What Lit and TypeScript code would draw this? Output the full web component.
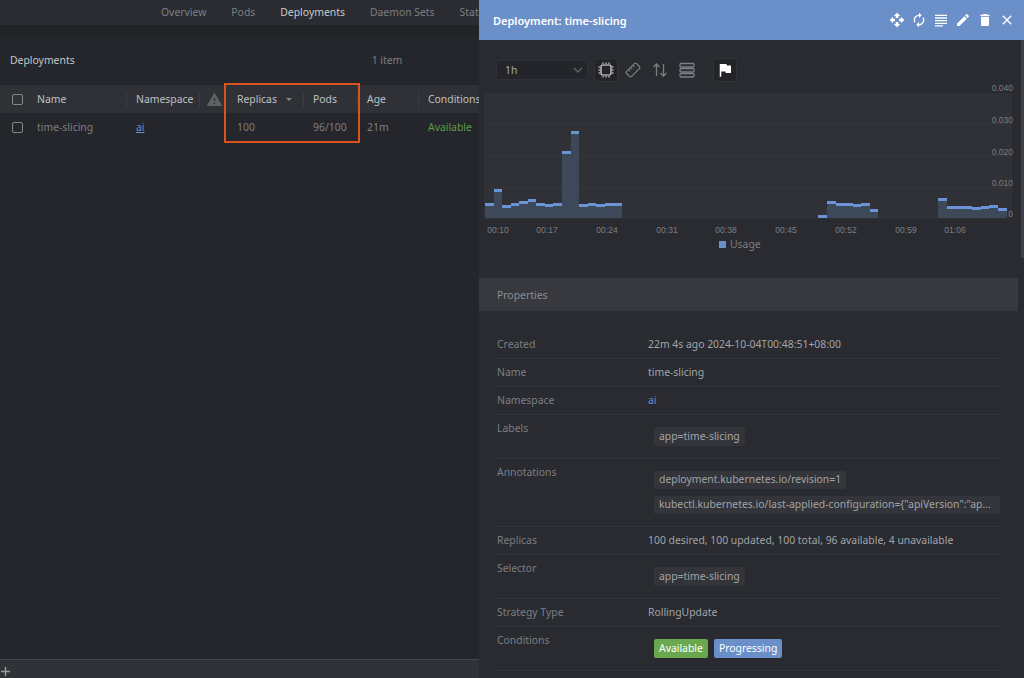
import { LitElement, html, css, svg } from 'lit';
import { customElement } from 'lit/decorators.js';

const headerIcons = [
  'M10 9h4V6h3l-5-5-5 5h3v3zm-1 1H6V7l-5 5 5 5v-3h3v-4zm14 2l-5-5v3h-3v4h3v3l5-5zm-9 3h-4v3H7l5 5 5-5h-3v-3z',
  'M12 6v3l4-4-4-4v3c-4.42 0-8 3.58-8 8 0 1.57.46 3.03 1.24 4.26L6.7 14.8c-.45-.83-.7-1.79-.7-2.8 0-3.31 2.69-6 6-6zm6.76 1.74L17.3 9.2c.44.84.7 1.79.7 2.8 0 3.31-2.69 6-6 6v-3l-4 4 4 4v-3c4.42 0 8-3.58 8-8 0-1.57-.46-3.03-1.24-4.26z',
  'M3 4h18v2H3zM3 8h18v2H3zM3 12h18v2H3zM3 16h18v2H3zM3 20h12v1.6H3z',
  'M3 17.25V21h3.75L17.81 9.94l-3.75-3.75L3 17.25zM20.71 7.04c.39-.39.39-1.02 0-1.41l-2.34-2.34c-.39-.39-1.02-.39-1.41 0l-1.83 1.83 3.75 3.75 1.83-1.83z',
  'M6 19c0 1.1.9 2 2 2h8c1.1 0 2-.9 2-2V7H6v12zM19 4h-3.5l-1-1h-5l-1 1H5v2h14V4z',
  'M19 6.41L17.59 5 12 10.59 6.41 5 5 6.41 10.59 12 5 17.59 6.41 19 12 13.41 17.59 19 19 17.59 13.41 12z',
];

// top y of each bar, by bucket index (61 buckets of 8.55px)
const BAR_W = 8.55;
const BAR_X = 485;
const BAR_BOTTOM = 218;
const bars: [number, number][] = [
  [0, 203], [1, 188.7], [2, 205], [3, 203], [4, 200.7], [5, 199], [6, 202.7], [7, 204.3],
  [8, 202.7], [9, 151.3], [10, 131], [11, 204], [12, 202.7], [13, 204], [14, 203], [15, 203],
  [39, 214.7], [40, 201], [41, 203.3], [42, 203.3], [43, 204.3], [44, 202.7], [45, 209],
  [53, 197.7], [54, 205.7], [55, 205.7], [56, 205.7], [57, 207.3], [58, 205.7], [59, 205.3], [60, 208.3],
];
const xLabels: [string, number][] = [
  ['00:10', 498], ['00:17', 547], ['00:24', 607], ['00:31', 667], ['00:38', 726],
  ['00:45', 786], ['00:52', 846], ['00:59', 906], ['01:06', 955],
];
const yLabels: [string, number][] = [
  ['0.040', 91], ['0.030', 123], ['0.020', 155], ['0.010', 186], ['0', 217],
];

@customElement('app-root')
export class AppRoot extends LitElement {
  static styles = css`
    :host {
      display: block;
      position: relative;
      width: 1024px;
      height: 678px;
      overflow: hidden;
      background: #24262b;
      font-family: 'Noto Sans', sans-serif;
      font-size: 10.4px;
      color: #8b8d92;
    }
    .main {
      display: flex;
      flex-direction: column;
      height: 678px;
    }
    .tabs {
      display: flex;
      height: 25px;
      flex: none;
      width: 479px;
      box-sizing: border-box;
      overflow: hidden;
      padding-left: 148.5px;
      background: #2a2c31;
      white-space: nowrap;
    }
    .tab {
      padding: 4px 12.5px 0;
      height: 21px;
      line-height: 16px;
      color: #7d7f84;
      border-bottom: 2px solid transparent;
    }
    .tab.active {
      color: #c9cbce;
      border-bottom-color: #6b8fc9;
    }
    .strip {
      height: 12px;
      flex: none;
      background: #212327;
    }
    .content {
      flex: 1;
      background: #24262b;
    }
    .title {
      display: flex;
      height: 48px;
      box-sizing: border-box;
      padding: 0 0 2px 10px;
      align-items: center;
      color: #c4c6c9;
    }
    .count {
      margin-left: 297px;
      color: #7d7f84;
    }
    .thead,
    .trow {
      display: grid;
      grid-template-columns: 28px 99px 73px 28px 76px 54px 61px 80px;
      align-items: center;
      box-sizing: border-box;
      height: 28px;
    }
    .thead {
      background: #2f3136;
      color: #bfc1c5;
    }
    .trow {
      color: #7d7f84;
    }
    .cell {
      padding-left: 9px;
      white-space: nowrap;
      position: relative;
    }
    .thead .cell.sep::after {
      content: '';
      position: absolute;
      right: 0;
      top: 0;
      height: 16px;
      width: 1px;
      background: #3a3c41;
    }
    .check {
      padding-left: 12px;
      display: flex;
    }
    .box {
      width: 9px;
      height: 9px;
      border: 1px solid #85878b;
      border-radius: 2px;
    }
    .warn {
      padding-left: 6px;
      display: flex;
    }
    .warn svg {
      width: 17px;
      height: 17px;
      fill: #5f6165;
    }
    .caret {
      display: inline-block;
      margin-left: 9px;
      vertical-align: 2px;
      border: 3px solid transparent;
      border-top: 3px solid #85878b;
      border-bottom: 0;
    }
    .link {
      color: #6b8fc9;
    }
    .underline {
      text-decoration: underline;
    }
    .ok {
      color: #5f9a4a;
    }
    .highlight {
      position: absolute;
      left: 224px;
      top: 83px;
      width: 132px;
      height: 56px;
      border: 2px solid #d9531e;
    }
    .footer {
      flex: none;
      height: 19px;
      background: #303237;
      border-top: 1px solid #44464b;
      padding: 7px 0 0 1px;
      box-sizing: border-box;
    }
    .footer svg {
      display: block;
      width: 9px;
      height: 9px;
      stroke: #9a9ca0;
      stroke-width: 1.4;
    }
    .drawer {
      position: absolute;
      left: 479px;
      top: 0;
      width: 545px;
      height: 678px;
      background: #292b30;
      display: flex;
      flex-direction: column;
      overflow: hidden;
    }
    .drawer-head {
      flex: none;
      height: 40px;
      display: flex;
      align-items: center;
      justify-content: space-between;
      padding: 0 9px 0 14px;
      background: #6b8fc9;
      color: #fff;
      font-size: 11px;
      font-weight: 600;
    }
    .head-icons {
      display: flex;
      gap: 6px;
    }
    .head-icons svg {
      width: 16px;
      height: 16px;
      fill: #fff;
      display: block;
    }
    .toolbar {
      flex: none;
      height: 44px;
      display: flex;
      align-items: center;
      padding: 16px 0 0 17px;
      box-sizing: border-box;
    }
    .select {
      width: 92px;
      height: 20px;
      box-sizing: border-box;
      display: flex;
      align-items: center;
      justify-content: space-between;
      padding: 0 4px 0 8px;
      margin-right: 6px;
      background: #23252a;
      border: 1px solid #2f3136;
      border-radius: 3px;
      color: #a6a8ad;
    }
    .select svg {
      width: 10px;
      height: 10px;
      stroke: #5f6165;
      stroke-width: 1.5;
      fill: none;
    }
    .tool {
      width: 24px;
      height: 24px;
      box-sizing: border-box;
      display: flex;
      align-items: center;
      justify-content: center;
      margin-right: 3px;
    }
    .tool.on {
      background: #222428;
      border: 1px solid #303237;
      border-radius: 3px;
    }
    .tool.flag {
      margin-left: 11px;
    }
    .tool svg {
      width: 18px;
      height: 18px;
      fill: none;
      stroke: #7d7f84;
      stroke-width: 1.3;
    }
    .tool.on svg {
      stroke: #e6e7e8;
      stroke-width: 1.2;
    }
    .tool.flag svg {
      fill: #fff;
      stroke: none;
    }
    .chart {
      flex: none;
      display: block;
      width: 545px;
      height: 152px;
      font-family: 'Liberation Sans', sans-serif;
      font-size: 8.5px;
    }
    .chart text {
      fill: #7d7f84;
    }
    .chart .bar {
      shape-rendering: crispEdges;
    }
    .legend {
      flex: none;
      height: 16px;
      display: flex;
      align-items: center;
      gap: 4px;
      padding-left: 240px;
      color: #7d7f84;
    }
    .swatch {
      width: 7px;
      height: 7px;
      background: #6b8fc9;
    }
    .section {
      flex: none;
      margin-top: 26px;
      width: 539px;
      height: 33px;
      box-sizing: border-box;
      padding-left: 18px;
      display: flex;
      align-items: center;
      background: #37393e;
      color: #8b8d92;
    }
    .props {
      margin: 20px 24px 0 18px;
    }
    .prop {
      display: grid;
      grid-template-columns: 151px 1fr;
      border-bottom: 1px solid #33353a;
      line-height: 16px;
      box-sizing: border-box;
      padding: 5px 0 6px;
    }
    .prop .key {
      color: #7d7f84;
    }
    .prop .val {
      color: #a2a4a8;
      min-width: 0;
    }
    .prop .val.link {
      color: #6b8fc9;
    }
    .chips {
      display: flex;
      flex-direction: column;
      align-items: flex-start;
      gap: 7px;
      padding: 7px 0 6px 6px;
      min-width: 0;
    }
    .chips.inline {
      flex-direction: row;
      gap: 6px;
    }
    .chip {
      box-sizing: border-box;
      height: 19px;
      line-height: 18px;
      padding: 0 5px;
      border-radius: 2px;
      background: #33353a;
      color: #a2a4a8;
      white-space: nowrap;
    }
    .chips.multi .chip {
      height: 18px;
      line-height: 17px;
    }
    .chips.multi .chip.wide {
      width: 346px;
    }
    .chip.green {
      background: #6aa84f;
      color: #fff;
    }
    .chip.blue {
      background: #6b8fc9;
      color: #fff;
    }
    .scroll {
      position: absolute;
      right: 0;
      top: 40px;
      width: 3px;
      height: 218px;
      background: #3f4146;
    }
  `;

  renderChart() {
    return html`<svg class="chart" viewBox="479 84 545 152">
      <rect x="484" y="93" width="528" height="126" fill="#2f3136"></rect>
      ${[124, 156, 188].map(
        (y) => svg`<line x1="484" x2="1012" y1=${y} y2=${y} stroke="#36383c"></line>`
      )}
      ${bars.map(([i, top]) => {
        const x = BAR_X + i * BAR_W;
        return svg`
          <rect class="bar" x=${x} y=${top} width=${BAR_W} height=${BAR_BOTTOM - top} fill="#3d4858"></rect>
          <rect class="bar" x=${x} y=${top} width=${BAR_W} height="3" fill="#6b93d6"></rect>`;
      })}
      ${xLabels.map(
        ([t, x]) => svg`<text x=${x} y="233" text-anchor="middle">${t}</text>`
      )}
      ${yLabels.map(
        ([t, y]) => svg`<text x="1013" y=${y} text-anchor="end">${t}</text>`
      )}
    </svg>`;
  }

  render() {
    return html`
      <div class="main">
        <div class="tabs">
          <div class="tab">Overview</div>
          <div class="tab">Pods</div>
          <div class="tab active">Deployments</div>
          <div class="tab">Daemon Sets</div>
          <div class="tab">Stateful Sets</div>
        </div>
        <div class="strip"></div>
        <div class="content">
          <div class="title">Deployments<span class="count">1 item</span></div>
          <div class="thead">
            <div class="cell check"><div class="box"></div></div>
            <div class="cell sep">Name</div>
            <div class="cell sep">Namespace</div>
            <div class="cell warn">
              <svg viewBox="0 0 24 24"><path d="M1 21h22L12 2 1 21zm12-3h-2v-2h2v2zm0-4h-2v-4h2v4z"></path></svg>
            </div>
            <div class="cell sep">Replicas<span class="caret"></span></div>
            <div class="cell sep">Pods</div>
            <div class="cell sep">Age</div>
            <div class="cell">Conditions</div>
          </div>
          <div class="trow">
            <div class="cell check"><div class="box"></div></div>
            <div class="cell">time-slicing</div>
            <div class="cell"><span class="link underline">ai</span></div>
            <div class="cell"></div>
            <div class="cell">100</div>
            <div class="cell">96/100</div>
            <div class="cell">21m</div>
            <div class="cell ok">Available</div>
          </div>
        </div>
        <div class="footer">
          <svg viewBox="0 0 9 9"><path d="M4.5 0v9M0 4.5h9"></path></svg>
        </div>
      </div>
      <div class="highlight"></div>
      <div class="drawer">
        <div class="drawer-head">
          <span>Deployment: time-slicing</span>
          <div class="head-icons">
            ${headerIcons.map(
              (d) => html`<svg viewBox="0 0 24 24"><path d=${d}></path></svg>`
            )}
          </div>
        </div>
        <div class="toolbar">
          <div class="select">
            1h
            <svg viewBox="0 0 10 10"><path d="M1 3l4 4 4-4"></path></svg>
          </div>
          <div class="tool on">
            <svg viewBox="0 0 18 18">
              <rect x="4" y="4" width="10" height="10" rx="1.5"></rect>
              <path stroke-width="1" d="M6 1.5v1.5M9 1.5v1.5M12 1.5v1.5M6 15v1.5M9 15v1.5M12 15v1.5M1.5 6h1.5M1.5 9h1.5M1.5 12h1.5M15 6h1.5M15 9h1.5M15 12h1.5"></path>
            </svg>
          </div>
          <div class="tool">
            <svg viewBox="0 0 18 18">
              <g transform="rotate(-45 9 9)">
                <rect x="2" y="5.5" width="14" height="7" rx="1.5"></rect>
                <path stroke-width="1" d="M6 5.5v2.5M9 5.5v2.5M12 5.5v2.5"></path>
              </g>
            </svg>
          </div>
          <div class="tool">
            <svg viewBox="0 0 18 18"><path d="M5.5 15V3M2.5 6l3-3 3 3M12.5 3v12M9.5 12l3 3 3-3"></path></svg>
          </div>
          <div class="tool">
            <svg viewBox="0 0 18 18">
              <rect x="2" y="2.5" width="14" height="3.5" rx="1"></rect>
              <rect x="2" y="7.5" width="14" height="3.5" rx="1"></rect>
              <rect x="2" y="12.5" width="14" height="3.5" rx="1"></rect>
            </svg>
          </div>
          <div class="tool on flag">
            <svg viewBox="0 0 24 24"><path d="M14.4 6L14 4H5v17h2v-7h5.6l.4 2h7V6z"></path></svg>
          </div>
        </div>
        ${this.renderChart()}
        <div class="legend"><span class="swatch"></span>Usage</div>
        <div class="section">Properties</div>
        <div class="props">
          <div class="prop"><div class="key">Created</div><div class="val">22m 4s ago 2024-10-04T00:48:51+08:00</div></div>
          <div class="prop"><div class="key">Name</div><div class="val">time-slicing</div></div>
          <div class="prop"><div class="key">Namespace</div><div class="val link">ai</div></div>
          <div class="prop">
            <div class="key">Labels</div>
            <div class="chips"><span class="chip">app=time-slicing</span></div>
          </div>
          <div class="prop">
            <div class="key">Annotations</div>
            <div class="chips multi">
              <span class="chip">deployment.kubernetes.io/revision=1</span>
              <span class="chip wide">kubectl.kubernetes.io/last-applied-configuration={"apiVersion":"ap...</span>
            </div>
          </div>
          <div class="prop"><div class="key">Replicas</div><div class="val">100 desired, 100 updated, 100 total, 96 available, 4 unavailable</div></div>
          <div class="prop">
            <div class="key">Selector</div>
            <div class="chips"><span class="chip">app=time-slicing</span></div>
          </div>
          <div class="prop"><div class="key">Strategy Type</div><div class="val">RollingUpdate</div></div>
          <div class="prop">
            <div class="key">Conditions</div>
            <div class="chips inline">
              <span class="chip green">Available</span>
              <span class="chip blue">Progressing</span>
            </div>
          </div>
        </div>
        <div class="scroll"></div>
      </div>
    `;
  }
}
